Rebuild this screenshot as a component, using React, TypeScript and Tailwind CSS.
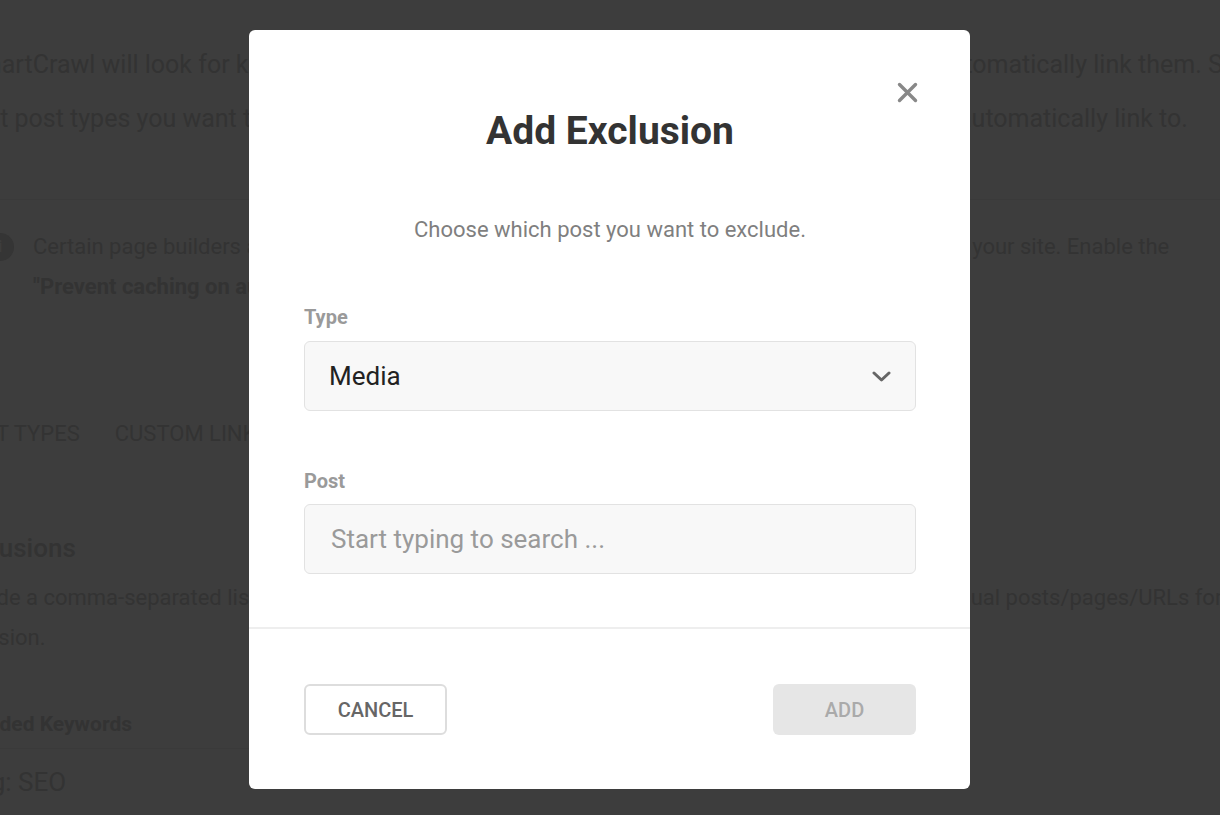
import * as React from 'react';

// dimmed settings page that sits behind the dialog
const BackdropPage: React.FC = () => {
  return (
    <div className="-ml-[44px] w-[1320px] text-[#333] whitespace-nowrap">
      <div className="pt-[38px] text-[25px] leading-[54px]">
        <div className="flex pl-[9px]">
          <span className="w-[972px] shrink-0 overflow-hidden">
            SmartCrawl will look for keywords that match posts/pages around your website and
          </span>
          <span>automatically link them. Specify what</span>
        </div>
        <div className="-ml-[2px] flex">
          <span className="w-[1004px] shrink-0 overflow-hidden">
            what post types you want to include in this tool, and what post types you want those to
          </span>
          <span>automatically link to.</span>
        </div>
      </div>

      <div className="mt-[53px] border-t border-[#3a3a3a]" />

      <div className="flex pt-[27px]">
        <div className="ml-[30px] mt-[6px] flex h-[28px] w-[28px] shrink-0 items-center justify-center rounded-full bg-[#353535] text-[16px] font-bold text-[#3d3d3d]">
          i
        </div>
        <div className="ml-[19px] text-[22px] leading-[40px]">
          <div className="flex">
            <span className="w-[909px] shrink-0 overflow-hidden">
              Certain page builders and plugins may prevent links from being inserted
            </span>
            <span>on your site. Enable the</span>
          </div>
          <div>
            <span className="font-bold">"Prevent caching on auto-linked content"</span> option to fix this.
          </div>
        </div>
      </div>

      <div className="-ml-[2px] mt-[116px] flex gap-[35px] text-[22px] leading-[22px]">
        <span>POST TYPES</span>
        <span>CUSTOM LINKS</span>
        <span>SETTINGS</span>
      </div>

      <div className="-ml-[5px] mt-[90px] text-[26px] leading-[26px] font-medium">Exclusions</div>
      <div className="-ml-[9px] mt-[17px] text-[22px] leading-[40px]">
        <div className="flex">
          <span className="w-[960px] shrink-0 overflow-hidden">
            Provide a comma-separated list of keywords that you do not want to autolink, or add
          </span>
          <span>individual posts/pages/URLs for</span>
        </div>
        <div>exclusion.</div>
      </div>

      <div className="-ml-[7px] mt-[56px] text-[21px] leading-[20px] font-bold">Excluded Keywords</div>
      <div className="mt-[14px] w-[700px] border-t border-[#3a3a3a]" />
      <div className="mt-[20px] pl-[14px] text-[26px] leading-[26px]">e.g: SEO</div>
    </div>
  );
};

const AddExclusionModal: React.FC = () => {
  const [postQuery, setPostQuery] = React.useState('');

  return (
    <div className="absolute left-[249px] top-[30px] h-[759px] w-[721px] rounded-[6px] bg-white">
      <button className="absolute right-[52px] top-[52px] h-[21px] w-[21px]" aria-label="Close">
        <svg width="21" height="21" viewBox="0 0 21 21" fill="none">
          <path d="M2.5 2.5L18.5 18.5M18.5 2.5L2.5 18.5" stroke="#888" strokeWidth="3.4" strokeLinecap="round" />
        </svg>
      </button>

      <div className="pl-[55px] pr-[54px] pt-[82px]">
        <h2 className="text-center text-[39px] leading-[39px] font-bold text-[#333]">Add Exclusion</h2>
        <p className="mt-[68px] text-center text-[22px] leading-[22px] text-[#7f7f7f]">
          Choose which post you want to exclude.
        </p>

        <label className="mt-[66px] block text-[20px] leading-[20px] font-bold text-[#9a9a9a]">Type</label>
        <div className="mt-[14px] flex h-[70px] items-center justify-between rounded-[6px] border border-[#e2e2e2] bg-[#f8f8f8] pl-[24px] pr-[24px]">
          <span className="text-[26px] text-[#222]">Media</span>
          <svg width="19" height="11" viewBox="0 0 19 11" fill="none">
            <path d="M2 2L9.5 9L17 2" stroke="#666" strokeWidth="3" strokeLinecap="round" strokeLinejoin="round" />
          </svg>
        </div>

        <label className="mt-[60px] block text-[20px] leading-[20px] font-bold text-[#9a9a9a]">Post</label>
        <input
          type="text"
          value={postQuery}
          onChange={(e) => setPostQuery(e.target.value)}
          placeholder="Start typing to search ..."
          className="mt-[13px] block h-[70px] w-full rounded-[6px] border border-[#e2e2e2] bg-[#f8f8f8] pl-[26px] text-[26px] text-[#222] outline-none placeholder:text-[#9a9a9a]"
        />

        <div className="-ml-[55px] -mr-[54px] mt-[53px] h-[2px] bg-[#eeeeee]" />

        <div className="mt-[55px] flex justify-between">
          <button className="h-[51px] w-[143px] rounded-[6px] border-2 border-[#dddddd] bg-white text-[20px] font-medium text-[#666]">
            CANCEL
          </button>
          <button
            disabled
            className="h-[51px] w-[143px] rounded-[6px] bg-[#e6e6e6] text-[20px] font-medium text-[#aaa]"
          >
            ADD
          </button>
        </div>
      </div>
    </div>
  );
};

const App: React.FC = () => {
  return (
    <div className="relative h-[815px] w-[1220px] overflow-hidden bg-[#3d3d3d] font-['Roboto',sans-serif]">
      <BackdropPage />
      <AddExclusionModal />
    </div>
  );
};

export default App;
